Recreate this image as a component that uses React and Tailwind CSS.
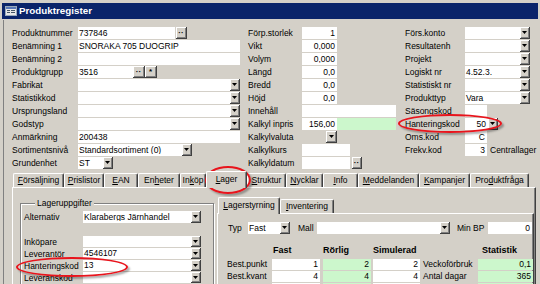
import React from 'react';

function Arrow() {
  return (
    <svg width="5" height="3" viewBox="0 0 5 3">
      <path d="M0 0h5L2.5 3z" fill="#000" />
    </svg>
  );
}

// raised classic button
function Btn({ w = 'w-[10px]', children }) {
  return (
    <div className={`${w} h-full shrink-0 flex items-center justify-center bg-[#d4d0c8] border-r border-b border-[#404040] shadow-[inset_1px_1px_0_#fff,inset_-1px_-1px_0_#808080] leading-none text-[8px] font-bold`}>
      {children || <Arrow />}
    </div>
  );
}

function Box({ w, v, right, combo, green, h = 'h-[12px]' }) {
  return (
    <div className={`${w} ${h} ${green ? 'bg-[#ccf7cc]' : 'bg-white'} shrink-0 flex items-center`}>
      <span className={`flex-1 whitespace-nowrap overflow-hidden leading-none ${right ? 'text-right pr-[2px]' : 'pl-[1px]'}`}>{v}</span>
      {combo && <Btn />}
    </div>
  );
}

function Row({ label, lw, h = 'h-[13px]', children }) {
  return (
    <div className={`${h} flex items-start`}>
      <span className={`${lw} shrink-0 whitespace-nowrap leading-[12px]`}>{label}</span>
      {children}
    </div>
  );
}

function Tab({ w, pre = '', u, post = '', sel }) {
  const base = 'flex items-center justify-center whitespace-nowrap leading-none border-t border-l border-white border-r border-r-[#404040] rounded-t-[2px] shadow-[inset_-1px_0_0_#808080]';
  return (
    <div className={sel ? `${w} ${base} h-[17px] -mb-px pb-[2px] relative z-10 bg-[#d4d0c8]` : `${w} ${base} h-[14px]`}>
      <span>
        {pre}
        <span className="underline underline-offset-1">{u}</span>
        {post}
      </span>
    </div>
  );
}

export default function App() {
  return (
    <div className="w-[540px] h-[284px] overflow-hidden relative bg-[#d4d0c8] text-black text-[8.5px] font-['Liberation_Sans',Arial,sans-serif]">
      {/* title bar */}
      <div className="pt-[3px] px-[2px]">
        <div className="h-[16px] bg-[#0a246a] flex items-center pl-[3px] gap-[2px]">
          <svg width="12" height="10" viewBox="0 0 12 10">
            <rect x="0.5" y="0.5" width="11" height="9" fill="#e8e8e8" stroke="#9ab" />
            <rect x="1" y="1" width="10" height="2" fill="#5878b8" />
            <rect x="2" y="4" width="3" height="1" fill="#456" />
            <rect x="6" y="4" width="4" height="1" fill="#456" />
            <rect x="2" y="6" width="3" height="1" fill="#456" />
            <rect x="6" y="6" width="4" height="1" fill="#456" />
          </svg>
          <span className="text-white font-bold text-[9.8px] leading-none">Produktregister</span>
        </div>
      </div>

      {/* client */}
      <div className="ml-[3px] mt-[1px] h-[264px] border-l border-[#808080] flex flex-col pt-[7px]">
        <div className="flex pl-[8px]">
          {/* column 1 */}
          <div className="w-[236px] shrink-0 flex flex-col">
            <Row label="Produktnummer" lw="w-[66px]">
              <Box w="w-[97px]" v="737846" />
              <div className="ml-[1px] h-[12px]"><Btn w="w-[11px]">··</Btn></div>
            </Row>
            <Row label="Benämning 1" lw="w-[66px]"><Box w="w-[162px]" v="SNÖRAKA 705 DUOGRIP" /></Row>
            <Row label="Benämning 2" lw="w-[66px]"><Box w="w-[162px]" /></Row>
            <Row label="Produktgrupp" lw="w-[66px]">
              <Box w="w-[55px]" v="3516" />
              <div className="h-[12px] flex">
                <Btn w="w-[12px]">··</Btn>
                <Btn w="w-[12px]">*</Btn>
              </div>
            </Row>
            <Row label="Fabrikat" lw="w-[66px]"><Box w="w-[162px]" combo /></Row>
            <Row label="Statistikkod" lw="w-[66px]"><Box w="w-[162px]" combo /></Row>
            <Row label="Ursprungsland" lw="w-[66px]"><Box w="w-[162px]" combo /></Row>
            <Row label="Godstyp" lw="w-[66px]"><Box w="w-[162px]" combo /></Row>
            <Row label="Anmärkning" lw="w-[66px]"><Box w="w-[162px]" v="200438" /></Row>
            <Row label="Sortimentsnivå" lw="w-[66px]"><Box w="w-[114px]" v="Standardsortiment (0)" combo /></Row>
            <Row label="Grundenhet" lw="w-[66px]"><Box w="w-[35px]" v="ST" combo /></Row>
          </div>

          {/* column 2 */}
          <div className="w-[157px] shrink-0 flex flex-col">
            <Row label="Förp.storlek" lw="w-[54px]"><Box w="w-[35px]" v="1" right /></Row>
            <Row label="Vikt" lw="w-[54px]"><Box w="w-[35px]" v="0,000" right /></Row>
            <Row label="Volym" lw="w-[54px]"><Box w="w-[35px]" v="0,000" right /></Row>
            <Row label="Längd" lw="w-[54px]"><Box w="w-[35px]" v="0,0" right /></Row>
            <Row label="Bredd" lw="w-[54px]"><Box w="w-[35px]" v="0,0" right /></Row>
            <Row label="Höjd" lw="w-[54px]"><Box w="w-[35px]" v="0,0" right /></Row>
            <Row label="Innehåll" lw="w-[54px]"><Box w="w-[94px]" /></Row>
            <Row label="Kalkyl inpris" lw="w-[54px]">
              <Box w="w-[35px]" v="156,00" right />
              <Box w="w-[59px]" green />
            </Row>
            <Row label="Kalkylvaluta" lw="w-[54px]">
              <div className="w-[35px] h-[12px] flex justify-end"><Btn w="w-[11px]" /></div>
            </Row>
            <Row label="Kalkylkurs" lw="w-[54px]"><Box w="w-[48px]" /></Row>
            <Row label="Kalkyldatum" lw="w-[54px]">
              <Box w="w-[48px]" />
              <div className="ml-[2px] h-[12px]"><Btn w="w-[10px]">··</Btn></div>
            </Row>
          </div>

          {/* column 3 */}
          <div className="flex flex-col">
            <Row label="Förs.konto" lw="w-[60px]"><Box w="w-[65px]" combo /></Row>
            <Row label="Resultatenh" lw="w-[60px]"><Box w="w-[65px]" combo /></Row>
            <Row label="Projekt" lw="w-[60px]"><Box w="w-[65px]" combo /></Row>
            <Row label="Logiskt nr" lw="w-[60px]"><Box w="w-[65px]" v="4.52.3." combo /></Row>
            <Row label="Statistiskt nr" lw="w-[60px]"><Box w="w-[65px]" combo /></Row>
            <Row label="Produkttyp" lw="w-[60px]"><Box w="w-[65px]" v="Vara" combo /></Row>
            <Row label="Säsongskod" lw="w-[60px]"><Box w="w-[22px]" /></Row>
            <Row label="Hanteringskod" lw="w-[60px]"><Box w="w-[33px]" v="50" right combo /></Row>
            <Row label="Oms.kod" lw="w-[60px]"><Box w="w-[22px]" v="C" right /></Row>
            <Row label="Frekv.kod" lw="w-[60px]">
              <Box w="w-[22px]" v="3" right />
              <span className="ml-[3px] leading-[12px] whitespace-nowrap">Centrallager</span>
            </Row>
          </div>
        </div>

        {/* main tabs */}
        <div className="mt-[1px] ml-[9px] h-[16px] flex items-end">
          <Tab w="w-[51px]" u="F" post="örsäljning" />
          <Tab w="w-[40px]" u="P" post="rislistor" />
          <Tab w="w-[34px]" u="E" post="AN" />
          <Tab w="w-[42px]" pre="En" u="h" post="eter" />
          <Tab w="w-[26px]" pre="In" u="k" post="öp" />
          <Tab w="w-[41px]" u="L" post="ager" sel />
          <Tab w="w-[39px]" u="S" post="truktur" />
          <Tab w="w-[37px]" u="N" post="ycklar" />
          <Tab w="w-[35px]" u="I" post="nfo" />
          <Tab w="w-[61px]" u="M" post="eddelanden" />
          <Tab w="w-[51px]" u="K" post="ampanjer" />
          <Tab w="w-[59px]" pre="Pro" u="d" post="uktfråga" />
        </div>

        {/* main panel */}
        <div className="ml-[8px] w-[524px] h-[110px] border-t border-l border-white border-r border-r-[#404040] shadow-[inset_-1px_0_0_#808080] flex items-start pl-[7px]">
          {/* group box */}
          <fieldset className="mt-[10px] w-[194px] h-[110px] border border-[#808080] shadow-[inset_1px_1px_0_#fff,1px_1px_0_#fff] pl-[3px] pt-[3px]">
            <legend className="ml-[11px] px-[2px] leading-[10px] bg-[#d4d0c8]">Lageruppgifter</legend>
            <Row label="Alternativ" lw="w-[59px]" h="h-[25px]">
              <Box w="w-[118px]" v="Klarabergs Järnhandel" combo />
            </Row>
            <Row label="Inköpare" lw="w-[59px]" h="h-[12px]"><Box w="w-[118px]" h="h-[11px]" combo /></Row>
            <Row label="Leverantör" lw="w-[59px]" h="h-[12px]"><Box w="w-[118px]" h="h-[11px]" v="4546107" combo /></Row>
            <Row label="Hanteringskod" lw="w-[59px]" h="h-[12px]"><Box w="w-[118px]" h="h-[11px]" v="13" combo /></Row>
            <Row label="Leveranskod" lw="w-[59px]" h="h-[12px]"><Box w="w-[118px]" h="h-[11px]" combo /></Row>
          </fieldset>

          {/* sub tabs */}
          <div className="ml-[3px] mt-[9px] flex flex-col">
            <div className="h-[16px] flex items-end pl-[1px]">
              <Tab w="w-[62px]" u="L" post="agerstyrning" sel />
              <Tab w="w-[54px]" u="I" post="nventering" />
            </div>
            <div className="w-[317px] h-[90px] border-t border-l border-white border-r border-r-[#404040] shadow-[inset_-1px_0_0_#808080] pt-[8px]">
              <div className="h-[12px] flex items-center pl-[10px]">
                <span className="w-[20px] leading-none">Typ</span>
                <Box w="w-[42px]" v="Fast" combo />
                <span className="ml-[8px] w-[19px] leading-none">Mall</span>
                <Box w="w-[133px]" combo />
                <span className="ml-[7px] w-[31px] leading-none whitespace-nowrap">Min BP</span>
                <Box w="w-[44px]" v="0" right />
              </div>

              <div className="mt-[10px] h-[12px] flex items-center pl-[9px] font-bold text-[9px] leading-none">
                <span className="w-[45px]" />
                <span className="w-[51px] pl-[1px]">Fast</span>
                <span className="w-[50px]">Rörlig</span>
                <span className="w-[105px]">Simulerad</span>
                <span className="pl-[4px]">Statistik</span>
              </div>

              <div className="mt-[3px] flex flex-col pl-[9px]">
                {[
                  ['Best.punkt', '1', '2', '2', 'Veckoförbruk', '0,1'],
                  ['Best.kvant', '4', '4', '4', 'Antal dagar', '365'],
                  ['', '', '', '', '', ''],
                ].map((r, i) => (
                  <div key={i} className="h-[12px] flex items-start">
                    <span className="w-[45px] leading-[11px] whitespace-nowrap">{r[0]}</span>
                    <Box w="w-[48px]" h="h-[11px]" v={r[1]} right />
                    <div className="w-[3px]" />
                    <Box w="w-[48px]" h="h-[11px]" v={r[2]} right green />
                    <div className="w-[2px]" />
                    <Box w="w-[47px]" h="h-[11px]" v={r[3]} right />
                    <span className="w-[58px] pl-[3px] leading-[11px] whitespace-nowrap">{r[4]}</span>
                    <Box w="w-[55px]" h="h-[11px]" v={r[5]} right green />
                  </div>
                ))}
              </div>
            </div>
          </div>
        </div>
      </div>

      {/* red annotation ellipses */}
      <div className="absolute left-[398px] top-[114px] w-[104px] h-[19px] rounded-[50%] border-2 border-[#e8141c] shadow-[2px_2px_2px_rgba(0,0,0,0.3)]" />
      <div className="absolute left-[205px] top-[166px] w-[46px] h-[28px] rounded-[50%] border-2 border-[#e8141c] shadow-[2px_2px_2px_rgba(0,0,0,0.3)]" />
      <div className="absolute left-[16px] top-[257px] w-[112px] h-[20px] rounded-[50%] border-2 border-[#e8141c] shadow-[2px_2px_2px_rgba(0,0,0,0.3)]" />
    </div>
  );
}
